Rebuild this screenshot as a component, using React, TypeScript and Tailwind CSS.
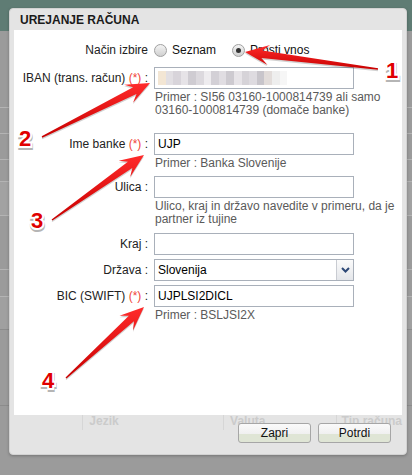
const font = "font-['Liberation_Sans',Arial,sans-serif]"

function Req() {
  return <span className="text-[#f0443a]">(*)</span>
}

function Label({ children }: { children: React.ReactNode }) {
  return (
    <div className="flex h-[22px] w-[134px] shrink-0 items-center justify-end whitespace-nowrap text-[#222]">
      {children}
    </div>
  )
}

function TextInput({ value }: { value?: string }) {
  return (
    <div className="flex h-[22px] w-[200px] items-center border border-[#a9b0ba] bg-white pl-[3px] text-black">
      {value}
    </div>
  )
}

function Hint({ lines }: { lines: string[] }) {
  return (
    <div className="mt-[2px] pl-[1px] leading-[13px] text-[#5a5a5a]">
      {lines.map((l) => (
        <div key={l} className="whitespace-nowrap">
          {l}
        </div>
      ))}
    </div>
  )
}

function Radio({ checked }: { checked?: boolean }) {
  return (
    <span className="flex h-[13px] w-[13px] items-center justify-center rounded-full border border-[#a0a0a0] bg-gradient-to-b from-[#f4f4f4] to-[#d0d0d0]">
      {checked && <span className="h-[5px] w-[5px] rounded-full bg-[#333]" />}
    </span>
  )
}

function Button({ children }: { children: React.ReactNode }) {
  return (
    <div className="flex h-[20px] w-[73px] items-center justify-center rounded-[3px] border border-[#a6a6a6] bg-[linear-gradient(#fafafa_0%,#f0f0f0_55%,#dfe5d5_56%,#dfe5d5_100%)] text-[12px] text-[#111]">
      {children}
    </div>
  )
}

const blur = ['#f3e6d4', '#e2dfe3', '#d8d4da', '#e6e3e7', '#cfccd2', '#dcd9de', '#eeecef', '#d3d0d6', '#e0dde2', '#cdcad0', '#e7e4e8', '#d6d3d8', '#dedbe0', '#c8c5cb', '#e2dcda', '#eeeeee', '#f6f6f6']

function arrow(x1: number, y1: number, x2: number, y2: number) {
  const dx = x2 - x1
  const dy = y2 - y1
  const L = Math.hypot(dx, dy)
  const ux = dx / L
  const uy = dy / L
  const nx = -uy
  const ny = ux
  const head = 24
  const neck = 17
  const hw = 10
  const sw = 3.8
  const tw = 0.7
  const p = (bx: number, by: number, w: number) => `${bx + nx * w},${by + ny * w}`
  const bx = x2 - ux * head
  const by = y2 - uy * head
  const kx = x2 - ux * neck
  const ky = y2 - uy * neck
  return [p(x1, y1, tw), p(kx, ky, sw), p(bx, by, hw), `${x2},${y2}`, p(bx, by, -hw), p(kx, ky, -sw), p(x1, y1, -tw)].join(' ')
}

const arrows = [
  { a: [378, 69, 245, 52], n: '1', x: 392, y: 78 },
  { a: [42, 137, 150, 83], n: '2', x: 25, y: 146 },
  { a: [52, 220, 144, 155], n: '3', x: 37, y: 228 },
  { a: [66, 378, 144, 307], n: '4', x: 48, y: 388 },
]

export default function App() {
  return (
    <div className={`relative h-[475px] w-[412px] overflow-hidden bg-[#9b9b9b] text-[12px] ${font}`}>
      {/* page behind the dialog */}
      <div className="h-[31px] bg-[#5f7c74]" />
      <div className="flex flex-col">
        <div className="h-[77px] border-b border-[#b4b4b4]" />
        <div className="h-[26px] border-b border-[#b4b4b4]" />
        <div className="h-[26px] border-b border-[#b4b4b4]" />
        <div className="h-[22px] border-b border-[#b4b4b4]" />
        <div className="h-[34px] border-b border-[#b4b4b4] bg-[#a2a2a2]" />
        <div className="h-[54px] border-b border-[#b4b4b4]" />
        <div className="h-[27px] border-b border-[#b4b4b4]" />
        <div className="h-[33px] border-b border-[#8c8c8c] bg-[#a0a0a0]" />
        <div className="h-[76px] border-b border-[#8c8c8c]" />
      </div>

      {/* dialog */}
      <div className="absolute left-[9px] top-[8px] flex h-[447px] w-[398px] flex-col rounded-[4px] border border-[#d2d2d2] bg-[#e4e4e4] px-[4px] shadow-[0_1px_3px_rgba(0,0,0,0.25)]">
        <div className="flex h-[21px] items-center pl-[6px] text-[12px] font-bold text-[#1a1a1a]">UREJANJE RAČUNA</div>

        <div className="h-[385px] bg-white pt-[11px]">
          <div className="flex h-[18px] items-center">
            <div className="w-[134px] text-right text-[#222]">Način izbire</div>
            <div className="ml-[6px] flex items-center">
              <Radio />
              <span className="ml-[5px] text-[#111]">Seznam</span>
              <span className="ml-[16px]">
                <Radio checked />
              </span>
              <span className="ml-[5px] text-[#111]">Prosti vnos</span>
            </div>
          </div>

          <div className="mt-[8px] flex">
            <Label>
              IBAN (trans. račun)&nbsp;<Req />&nbsp;:
            </Label>
            <div className="ml-[6px]">
              <div className="flex h-[22px] w-[200px] items-center border border-[#a9b0ba] bg-white pl-[3px]">
                {blur.map((c, i) => (
                  <span key={i} className="h-[14px] w-[7.6px]" style={{ backgroundColor: c }} />
                ))}
              </div>
              <Hint lines={['Primer : SI56 03160-1000814739 ali samo', '03160-1000814739 (domače banke)']} />
            </div>
          </div>

          <div className="mt-[16px] flex">
            <Label>
              Ime banke&nbsp;<Req />&nbsp;:
            </Label>
            <div className="ml-[6px]">
              <TextInput value="UJP" />
              <Hint lines={['Primer : Banka Slovenije']} />
            </div>
          </div>

          <div className="mt-[6px] flex">
            <Label>Ulica :</Label>
            <div className="ml-[6px]">
              <TextInput />
              <Hint lines={['Ulico, kraj in državo navedite v primeru, da je', 'partner iz tujine']} />
            </div>
          </div>

          <div className="mt-[7px] flex">
            <Label>Kraj :</Label>
            <div className="ml-[6px]">
              <TextInput />
            </div>
          </div>

          <div className="mt-[4px] flex">
            <Label>Država :</Label>
            <div className="ml-[6px] flex h-[22px] w-[200px] border border-[#a9b0ba] bg-white">
              <div className="flex flex-1 items-center pl-[3px] text-black">Slovenija</div>
              <div className="flex w-[17px] items-center justify-center border-l border-[#c9ccd2] bg-gradient-to-b from-[#fbfbfb] to-[#e4e6ea]">
                <svg width="9" height="6" viewBox="0 0 9 6">
                  <path d="M1 1 L4.5 4.5 L8 1" fill="none" stroke="#2d4876" strokeWidth="2" />
                </svg>
              </div>
            </div>
          </div>

          <div className="mt-[4px] flex">
            <Label>
              BIC (SWIFT)&nbsp;<Req />&nbsp;:
            </Label>
            <div className="ml-[6px]">
              <TextInput value="UJPLSI2DICL" />
              <Hint lines={['Primer : BSLJSI2X']} />
            </div>
          </div>
        </div>

        {/* footer, with the page's table header faintly showing through */}
        <div className="flex-1">
          <div className="flex h-[15px] whitespace-nowrap text-[12px] font-bold leading-[12px] text-[#cbcbcb]">
            <div className="w-[71px] border-r border-[#d6d6d6]" />
            <div className="w-[144px] border-r border-[#d6d6d6] pl-[6px]">Jezik</div>
            <div className="w-[115px] border-r border-[#d6d6d6] pl-[6px]">Valuta</div>
            <div className="pl-[5px]">Tip računa</div>
          </div>
          <div className="-mt-[7px] flex justify-end gap-[7px] pr-[11px]">
            <Button>Zapri</Button>
            <Button>Potrdi</Button>
          </div>
        </div>
      </div>

      {/* annotations */}
      <svg className="pointer-events-none absolute left-0 top-0" width="412" height="475">
        <defs>
          <linearGradient id="red" x1="0" y1="0" x2="0" y2="1">
            <stop offset="0" stopColor="#ff2b2b" />
            <stop offset="1" stopColor="#c80000" />
          </linearGradient>
        </defs>
        {arrows.map(({ a, n, x, y }) => (
          <g key={n}>
            <polygon points={arrow(a[0], a[1] + 1.5, a[2], a[3] + 1.5)} fill="rgba(0,0,0,0.18)" />
            <polygon points={arrow(a[0], a[1], a[2], a[3])} fill="url(#red)" />
            <text x={x + 0.5} y={y + 1.5} textAnchor="middle" fontSize="22" fontWeight="bold" fill="#b5b5b5" stroke="#b5b5b5" strokeWidth="4" className={font}>
              {n}
            </text>
            <text x={x} y={y} textAnchor="middle" fontSize="22" fontWeight="bold" fill="#e00000" stroke="#fff" strokeWidth="4" paintOrder="stroke" className={font}>
              {n}
            </text>
          </g>
        ))}
      </svg>
    </div>
  )
}
